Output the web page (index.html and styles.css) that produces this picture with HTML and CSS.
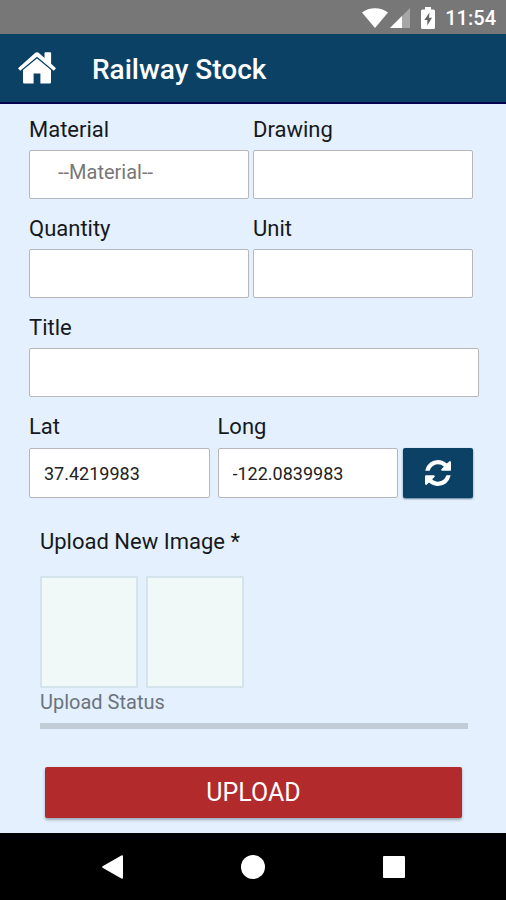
FILE: index.html
```html
<!DOCTYPE html>
<html lang="en">
  <head>
    <meta charset="UTF-8" />
    <meta name="viewport" content="width=device-width, initial-scale=1" />
    <title>Railway Stock</title>
    <link rel="stylesheet" href="styles.css">
  </head>
  <body>
    <div class="status-bar">
      <svg class="icon-wifi" viewBox="0 0 26 20" width="26" height="20">
        <path d="M0 4.500C7-1.300 19-1.300 26 4.500L13 20z" fill="#fff" />
      </svg>
      <svg class="icon-signal" viewBox="0 0 20 20" width="20" height="20">
        <path d="M0 20L20 0v20z" fill="#a6a6a6" />
        <path d="M0 20L12 8v12z" fill="#fff" />
      </svg>
      <svg class="icon-battery" viewBox="0 0 14 22" width="14" height="22">
        <path d="M4 0h6v2.500h2.500q1.500 0 1.500 1.500v16.500q0 1.500-1.500 1.500h-11q-1.500 0-1.500-1.500V4q0-1.500 1.500-1.500H4z" fill="#fff" />
        <path d="M8.500 5.500L3.300 13h3v5.500L11 10.800H8z" fill="#666" />
      </svg>
      <span class="clock">11:54</span>
    </div>
    <header class="header">
      <a href="#" class="home" aria-label="Home">
        <svg viewBox="0 0 38 32" width="38" height="32" fill="#fff">
          <path d="M0 16.300L16.800 1.200q2.200-1.800 4.400 0l5.300 4.700V1.200q0-.9.900-.9h4.800q.9 0 .9.900v10.600L38 16.300l-2.200 2.400L19 4.700 2.200 18.700z" />
          <path d="M19 6.500L33 18v12.200q0 1.300-1.300 1.300h-9.300V21.500h-6.800v10H6.300Q5 31.500 5 30.200V18z" />
        </svg>
      </a>
      <h1>Railway Stock</h1>
    </header>
    <main class="content">
      <form class="form">
        <div class="row">
          <div class="field">
            <label for="material">Material</label>
            <select id="material">
              <option>--Material--</option>
            </select>
          </div>
          <div class="field">
            <label for="drawing">Drawing</label>
            <input type="text" id="drawing" />
          </div>
        </div>
        <div class="row">
          <div class="field">
            <label for="quantity">Quantity</label>
            <input type="text" id="quantity" />
          </div>
          <div class="field">
            <label for="unit">Unit</label>
            <input type="text" id="unit" />
          </div>
        </div>
        <div class="field">
          <label for="title">Title</label>
          <input type="text" id="title" />
        </div>
        <div class="row row-location">
          <div class="field">
            <label for="lat">Lat</label>
            <input type="text" id="lat" value="37.4219983" />
          </div>
          <div class="field">
            <label for="long">Long</label>
            <input type="text" id="long" value="-122.0839983" />
          </div>
          <button type="button" class="btn-refresh" aria-label="Refresh">
            <svg viewBox="0 0 1536 1536" width="26" height="26" fill="#fff">
              <path d="M1511 928q0 5-1 7-64 268-268 434.500T764 1536q-146 0-282.500-55T238 1324l-129 129q-19 19-45 19t-45-19-19-45V960q0-26 19-45t45-19h448q26 0 45 19t19 45-19 45l-137 137q71 66 161 102t187 36q134 0 250-65t186-179q11-17 53-117 8-23 30-23h192q13 0 22.500 9.500t9.500 22.500zM1536 128v448q0 26-19 45t-45 19h-448q-26 0-45-19t-19-45 19-45l138-138Q969 256 768 256q-134 0-250 65T332 500q-11 17-53 117-8 23-30 23H50q-13 0-22.500-9.500T18 608v-7q65-268 270-434.500T768 0q146 0 284 55.500T1297 212l130-129q19-19 45-19t45 19 19 45z" />
            </svg>
          </button>
        </div>
        <section class="upload">
          <h2>Upload New Image *</h2>
          <div class="thumbs">
            <div class="thumb"></div>
            <div class="thumb"></div>
          </div>
          <label class="upload-status" for="progress">Upload Status</label>
          <progress id="progress" value="0" max="100"></progress>
        </section>
        <button type="submit" class="btn-upload">UPLOAD</button>
      </form>
    </main>
    <nav class="nav-bar">
      <button type="button" aria-label="Back">
        <svg viewBox="0 0 24 24" width="24" height="24" fill="#fff">
          <path d="M2.600 11.200L21.800.3Q23 0 23 1.300v21.400q0 1.300-1.200 1L2.600 12.800q-1.200-.8 0-1.600z" />
        </svg>
      </button>
      <button type="button" aria-label="Home screen">
        <svg viewBox="0 0 24 24" width="24" height="24" fill="#fff">
          <circle cx="12" cy="12" r="12" />
        </svg>
      </button>
      <button type="button" aria-label="Recent apps">
        <svg viewBox="0 0 24 24" width="24" height="24" fill="#fff">
          <rect x="1" y="1" width="22" height="22" rx="1" />
        </svg>
      </button>
    </nav>
  </body>
</html>
```

FILE: styles.css
```css
* {
  box-sizing: border-box;
}
body {
  display: flex;
  flex-direction: column;
  margin: 0;
  min-height: 100vh;
  font-family: Roboto, 'Liberation Sans', sans-serif;
  color: #16191c;
  background: #e4f0fe;
}
button,
input,
select {
  margin: 0;
  font-family: inherit;
}
button {
  padding: 0;
  border: 0;
  cursor: pointer;
}
svg {
  display: block;
}

/* status bar */
.status-bar {
  display: flex;
  justify-content: flex-end;
  align-items: center;
  height: 34px;
  padding: 1px 10px 0 0;
  background: #777;
}
.icon-signal {
  margin-left: 2px;
}
.icon-battery {
  margin-left: 11px;
}
.clock {
  margin-left: 10px;
  font-size: 20px;
  font-weight: 500;
  line-height: 24px;
  color: #fff;
}

/* header */
.header {
  display: flex;
  align-items: center;
  height: 70px;
  padding-left: 18px;
  background: #0c4166;
  border-bottom: 2px solid #00044f;
}
.header h1 {
  margin: 4px 0 0 36px;
  font-size: 28px;
  font-weight: 500;
  line-height: 36px;
  color: #fff;
}

/* form */
.content {
  flex: 1;
  padding: 12px 27px 13px 29px;
}
.form {
  display: flex;
  flex-direction: column;
  gap: 16px;
}
.row {
  display: flex;
  align-items: flex-end;
  gap: 4px;
  padding-right: 6px;
}
.field {
  display: flex;
  flex: 1;
  flex-direction: column;
  gap: 6px;
  min-width: 0;
}
.field label {
  font-size: 22px;
  line-height: 28px;
}
.field input,
.field select {
  width: 100%;
  height: 49px;
  padding: 0 14px;
  font-size: 18px;
  color: #222;
  background: #fff;
  border: 1px solid #b4b8bc;
  border-radius: 2px;
}
.field select {
  appearance: none;
  padding: 0 28px 6px;
  font-size: 20px;
  color: #777;
}
.row-location {
  gap: 8px;
}
.row-location input,
.btn-refresh {
  height: 50px;
}
.row-location .field {
  gap: 7px;
}
.btn-refresh {
  display: flex;
  justify-content: center;
  align-items: center;
  width: 70px;
  margin-left: -3px;
  background: #0c4166;
  border-radius: 2px;
  box-shadow: 0 1px 2px #5c7d9a;
}

/* image upload */
.upload {
  display: flex;
  flex-direction: column;
  padding: 14px 11px 0;
}
.upload h2 {
  margin: 0;
  font-size: 22px;
  font-weight: 400;
  line-height: 28px;
}
.thumbs {
  display: flex;
  gap: 8px;
  margin-top: 20px;
}
.thumb {
  width: 98px;
  height: 112px;
  background: #f1f9f8;
  border: 2px solid #d5e3ea;
}
.upload-status {
  font-size: 20px;
  line-height: 28px;
  color: #6b747c;
}
progress {
  appearance: none;
  width: 100%;
  height: 6px;
  margin-top: 7px;
  border: 0;
  background: #c1ccd7;
}
progress::-webkit-progress-bar {
  background: #c1ccd7;
}
progress::-webkit-progress-value {
  background: #0c4166;
}
.btn-upload {
  height: 51px;
  margin: 22px 17px 0 16px;
  font-size: 25px;
  color: #fff;
  background: #b22a2b;
  border-radius: 2px;
  box-shadow: 0 2px 3px #9aa9b5;
}

/* navigation bar */
.nav-bar {
  display: grid;
  grid-template-columns: repeat(3, 1fr);
  align-items: center;
  height: 67px;
  padding: 0 42px;
  background: #000;
}
.nav-bar button {
  display: flex;
  justify-content: center;
  background: transparent;
}
```
